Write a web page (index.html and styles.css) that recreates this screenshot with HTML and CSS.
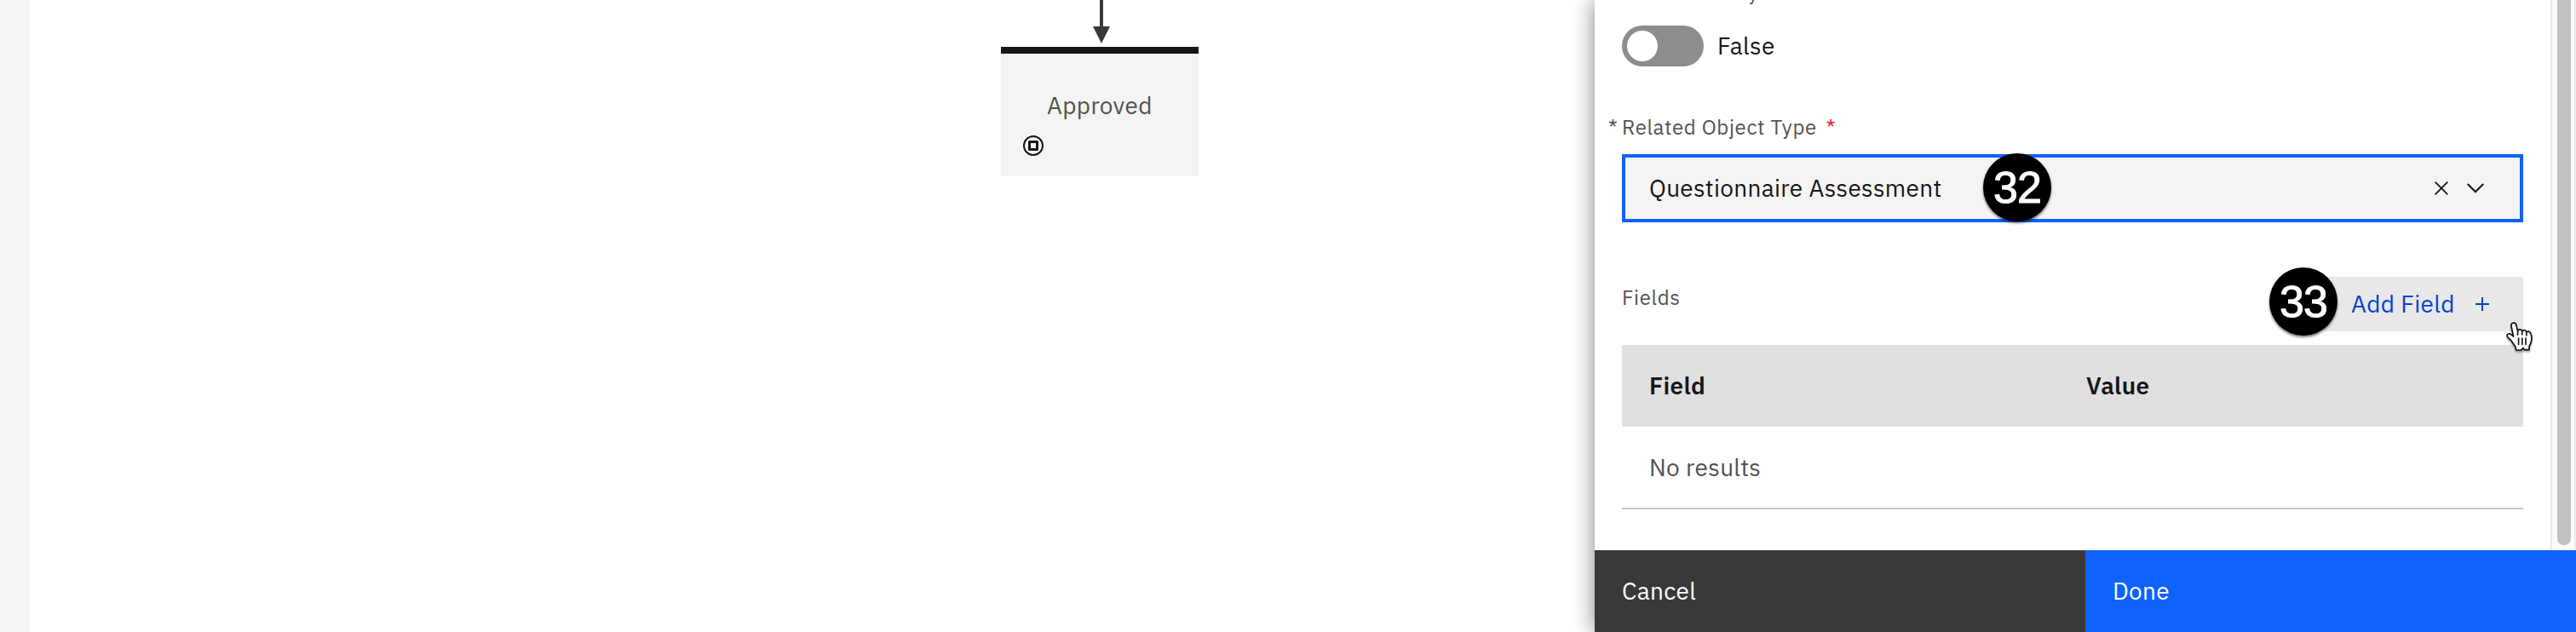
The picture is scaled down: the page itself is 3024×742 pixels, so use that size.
FILE: index.html
```
<!DOCTYPE html>
<html lang="en">
<head>
<meta charset="utf-8">
<title>Workflow</title>
<link rel="stylesheet" href="styles.css">
</head>
<body>
<div class="app">
  <div class="rail"></div>
  <main class="canvas">
    <svg class="arrow" viewBox="0 0 20 51" width="20" height="51"><path d="M8 0h4v31h8L10 51 0 31h8z" fill="#393939"/></svg>
    <div class="node">
      <span class="node-title">Approved</span>
      <svg class="node-icon" viewBox="0 0 24 24" width="24" height="24" fill="none" stroke="#161616"><circle cx="12" cy="12" r="11" stroke-width="2"/><rect x="7.5" y="7.5" width="9" height="9" stroke-width="3" stroke-linejoin="round"/></svg>
    </div>
  </main>
  <aside class="panel">
    <div class="panel-body">
      <div class="form">
        <div class="clipped-label"><span class="clipped-text">y</span></div>
        <div class="toggle-row"><span class="toggle"><span class="knob"></span></span><span class="toggle-text">False</span></div>
        <div class="label-row"><span class="star">*</span><span class="label">Related Object Type</span><span class="star required">*</span></div>
        <div class="select">
          <span class="select-value">Questionnaire Assessment</span>
          <svg class="clear" viewBox="0 0 16 16" width="16" height="16" fill="none" stroke="#161616" stroke-width="1.8"><path d="M.7.7l14.6 14.6M15.3.7L.7 15.3"/></svg>
          <svg viewBox="0 0 20 12" width="20" height="12" fill="none" stroke="#161616" stroke-width="2.1"><path d="M.8 1L10 10.2 19.2 1"/></svg>
          <span class="badge badge-select">32</span>
        </div>
        <div class="fields-bar">
          <span class="fields-label">Fields</span>
          <button class="add"><span class="add-text">Add Field</span><svg viewBox="0 0 16 16" width="16" height="16" stroke="#0043ce" stroke-width="2"><path d="M8 0v16M0 8h16"/></svg>
            <span class="badge badge-add">33</span>
            <svg class="cursor" viewBox="0 0 34 38" width="34" height="38"><path d="M9.4 2.2C11.2 1.8 12.4 2.8 12.8 4.5L14.6 11.6C15.5 9 19.2 9.3 19.8 11.8 21 9.9 24.2 10.4 24.9 12.9 26.6 11.3 29.2 12.4 30 14.8 31.7 18.5 31 22 30.2 25.2L28 30.2 28.2 33.6 22.4 33.6 21 31.4 18.7 34 12.8 34 11.7 29.6C9.5 27.3 8.2 24.3 6.2 22 3.7 20 1.4 18.2 2.2 16 3.5 13.8 6.5 14.6 9.5 18L7 5.6C6.6 3.8 7.7 2.5 9.4 2.2Z" fill="#fff" stroke="#111" stroke-width="1.7" stroke-linejoin="round"/><path d="M14.6 12v4M19.8 12v4M24.9 13v4M15.6 20v7.5M19.8 20v7.5M24 20v7.5" stroke="#111" stroke-width="1.6" stroke-linecap="round"/></svg>
          </button>
        </div>
        <div class="table">
          <div class="thead"><span class="th-field">Field</span><span class="th-value">Value</span></div>
          <div class="trow"><span class="empty">No results</span></div>
        </div>
      </div>
      <div class="scrollbar"><div class="thumb"></div></div>
    </div>
    <footer class="actions"><button class="cancel"><span class="cancel-text">Cancel</span></button><button class="done"><span class="done-text">Done</span></button></footer>
  </aside>
</div>
</body>
</html>
```
FILE: styles.css
```
* { box-sizing: border-box; }
body { margin: 0; background: #fff; font: 28px/36px "IBM Plex Sans", Roboto, "Liberation Sans", sans-serif; letter-spacing: .32px; color: #161616; }
button { font: inherit; letter-spacing: inherit; border: 0; border-radius: 0; text-align: left; }
svg { display: block; flex: none; }
span { white-space: nowrap; }
.app { display: flex; width: 3024px; height: 742px; overflow: hidden; }
.rail { width: 35px; background: #f4f4f4; }
.canvas { flex: 1; }
.arrow { margin-left: 1248px; }
.node { width: 232px; height: 152px; margin: 4px 0 0 1140px; border-top: 8px solid #161616; background: #f4f4f4; padding: 42px 26px 0; color: #525252; }
.node-title { display: block; margin-left: 28px; line-height: 38px; }
.node-icon { margin-top: 16px; }
.panel { width: 1152px; display: flex; flex-direction: column; background: #fff; position: relative; box-shadow: 0 0 24px rgba(0,0,0,.5); }
.panel-body { height: 646px; display: flex; }
.form { width: 1122px; padding: 0 32px; }
.clipped-label { height: 30px; padding-left: 148px; font-size: 24px; color: #525252; }
.clipped-text { display: block; margin-top: -27px; line-height: 36px; height: 36px; }
.clipped-label { display: flex; align-items: flex-start; }
.toggle-row { display: flex; align-items: center; height: 48px; gap: 16px; }
.toggle { width: 96px; height: 48px; border-radius: 24px; background: #8d8d8d; padding: 6px; }
.knob { display: block; width: 36px; height: 36px; border-radius: 50%; background: #fff; }
.label-row { display: flex; margin: 53px 0 0 -16px; height: 50px; line-height: 36px; font-size: 24px; color: #525252; }
.star { width: 16px; }
.label { letter-spacing: .64px; }
.required { color: #da1e28; margin-left: 11px; }
.select { position: relative; height: 80px; display: flex; align-items: center; background: #f4f4f4; border: 4px solid #0f62fe; padding: 0 42px 0 28px; gap: 22px; }
.select-value { flex: 1; }
.badge { position: absolute; width: 80px; height: 80px; border-radius: 50%; background: #000; color: #fff; font: 52px/80px "Liberation Sans", Arial, sans-serif; text-align: center; -webkit-text-stroke: 1px #fff; box-shadow: 0 2px 3px rgba(0,0,0,.55); letter-spacing: -1px; }
.badge-select { left: 420px; top: -5px; }
.badge-add { left: -64px; top: -11px; }
.fields-bar { display: flex; justify-content: space-between; margin-top: 64px; height: 80px; }
.fields-label { margin-top: 6px; font-size: 24px; color: #525252; letter-spacing: .64px; }
.add { position: relative; display: flex; justify-content: space-between; align-items: center; width: 234px; height: 64px; padding: 0 40px 0 32px; background: #e8e8e8; color: #0043ce; }
.cursor { position: absolute; left: 213px; top: 52px; filter: drop-shadow(0 2px 1px rgba(0,0,0,.35)); }
.thead { display: grid; grid-template-columns: 513px 1fr; align-items: center; height: 96px; padding-left: 32px; background: #e0e0e0; font-weight: 600; }
.trow { display: flex; align-items: center; height: 97px; padding-left: 32px; border-bottom: 2px solid #c6c6c6; color: #525252; }
.scrollbar { width: 30px; border-left: 2px solid #e8e8e8; border-right: 2px solid #ececec; background: #fafafa; padding: 0 4px 6px 6px; }
.thumb { height: 640px; border-radius: 0 0 8px 8px; background: #c1c1c1; }
.actions { display: flex; height: 96px; }
.cancel, .done { width: 576px; padding: 0 32px; color: #fff; }
.cancel { background: #393939; }
.done { background: #0f62fe; }
```
